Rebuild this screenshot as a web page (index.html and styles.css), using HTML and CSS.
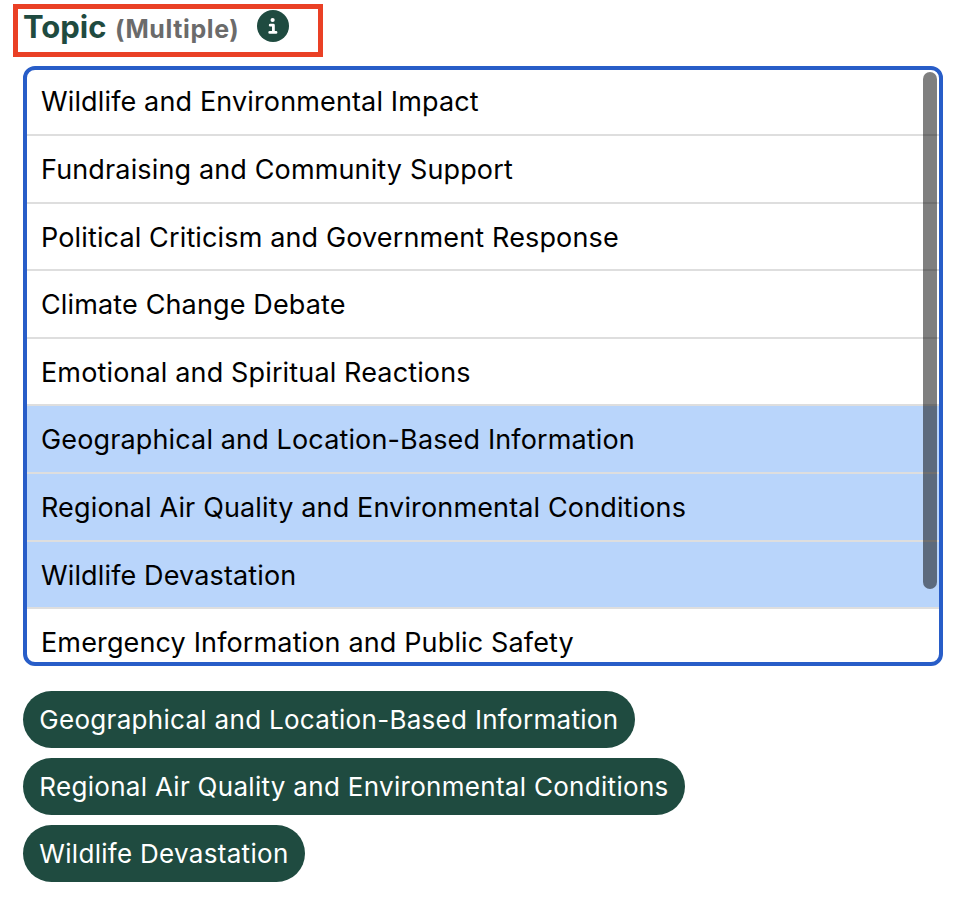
FILE: index.html
```html
<!DOCTYPE html>
<html lang="en">
<head>
<meta charset="utf-8">
<title>Topic</title>
<link rel="stylesheet" href="styles.css">
</head>
<body>
<main class="field">
  <div class="heading">
    <span class="title">Topic</span>
    <span class="hint">(Multiple)</span>
    <svg class="info" viewBox="0 0 32 32" role="img" aria-label="Info"><circle cx="16" cy="16" r="16" fill="#1f4b40"/><circle cx="15.6" cy="10" r="2.1" fill="#fff"/><path d="M13.2 15.2H16.4V22.4M12.7 22.4H19" fill="none" stroke="#fff" stroke-width="2.8" stroke-linecap="round" stroke-linejoin="round"/></svg>
  </div>
  <div class="listbox">
    <ul class="options">
      <li>Wildlife and Environmental Impact</li>
      <li>Fundraising and Community Support</li>
      <li>Political Criticism and Government Response</li>
      <li>Climate Change Debate</li>
      <li>Emotional and Spiritual Reactions</li>
      <li class="selected">Geographical and Location-Based Information</li>
      <li class="selected">Regional Air Quality and Environmental Conditions</li>
      <li class="selected">Wildlife Devastation</li>
      <li>Emergency Information and Public Safety</li>
    </ul>
    <div class="thumb"></div>
  </div>
  <div class="tags">
    <span class="tag">Geographical and Location-Based Information</span>
    <span class="tag">Regional Air Quality and Environmental Conditions</span>
    <span class="tag">Wildlife Devastation</span>
  </div>
</main>
</body>
</html>
```
FILE: styles.css
```css
* { box-sizing: border-box; }
body { margin: 0; background: #fff; font-family: Inter, "Liberation Sans", sans-serif; color: #000; }
.field { padding: 4px 23px 0 13px; }
.heading { width: 310px; height: 53px; border: 5px solid #ea4025; display: flex; align-items: flex-start; padding: 0 0 0 5px; white-space: nowrap; }
.title { font-size: 31px; font-weight: 700; line-height: 36px; color: #1f4b40; width: 92px; }
.hint { font-size: 25px; font-weight: 700; line-height: 40px; letter-spacing: .6px; color: #6b6b6b; width: 142px; }
.info { width: 32px; height: 32px; margin-top: 1px; flex: none; }
.listbox { position: relative; margin: 9px 0 0 10px; width: 920px; height: 600px; border: 4px solid #285dc8; border-radius: 12px; overflow: hidden; }
.options { list-style: none; margin: -1.6px 0 0; padding: 0; }
.options li { height: 67.6px; padding: 0 14px; border-bottom: 2px solid #dedede; font-size: 27px; line-height: 67.6px; letter-spacing: .14px; white-space: nowrap; }
.options .selected { background: #b9d5fb; }
.thumb { position: absolute; right: 2px; top: 2px; width: 14px; height: 517px; border-radius: 7px; background: rgba(0,0,0,.5); }
.tags { margin: 25px 0 0 10px; display: flex; flex-direction: column; align-items: flex-start; gap: 10px; }
.tag { height: 57px; border-radius: 29px; background: #1f4b40; color: #fff; padding: 0 16.3px; font-size: 26px; line-height: 57px; letter-spacing: .3px; white-space: nowrap; }
```
